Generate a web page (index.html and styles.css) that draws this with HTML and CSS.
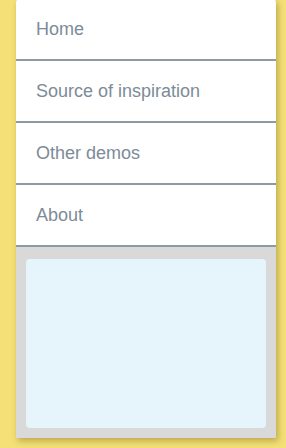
FILE: index.html
```html
<!DOCTYPE html>
<html lang="en">
<head>
    <meta charset="UTF-8">
    <meta name="viewport" content="width=device-width, initial-scale=1.0">
    <title>Menu</title>
    <link rel="stylesheet" href="styles.css">
</head>
<body>
    <div class="panel">
        <nav class="menu">
            <a class="menu-item" href="#">Home</a>
            <a class="menu-item" href="#">Source of inspiration</a>
            <a class="menu-item" href="#">Other demos</a>
            <a class="menu-item" href="#">About</a>
        </nav>
        <div class="content">
            <div class="content-box"></div>
        </div>
    </div>
</body>
</html>
```

FILE: styles.css
```css
body {
    margin: 0;
    background: #f4e077;
    font-family: "Liberation Sans", Arial, sans-serif;
    height: 448px;
    overflow: hidden;
}

.panel {
    width: 260px;
    margin: -1px 0 0 16px;
    height: 439px;
    display: flex;
    flex-direction: column;
    border-radius: 4px 4px 0 0;
    overflow: hidden;
    box-shadow: 2px 3px 6px rgba(120, 100, 20, 0.45);
}

.menu {
    display: flex;
    flex-direction: column;
    background: #ffffff;
}

.menu-item {
    display: flex;
    align-items: center;
    height: 60px;
    padding-left: 20px;
    border-bottom: 2px solid #8d9aa3;
    color: #7d8b98;
    font-size: 18px;
    text-decoration: none;
}

.content {
    flex: 1;
    background: #d9d9d9;
    padding: 12px 10px 10px;
    display: flex;
}

.content-box {
    flex: 1;
    background: #e6f5fb;
    border-radius: 4px;
}
```
